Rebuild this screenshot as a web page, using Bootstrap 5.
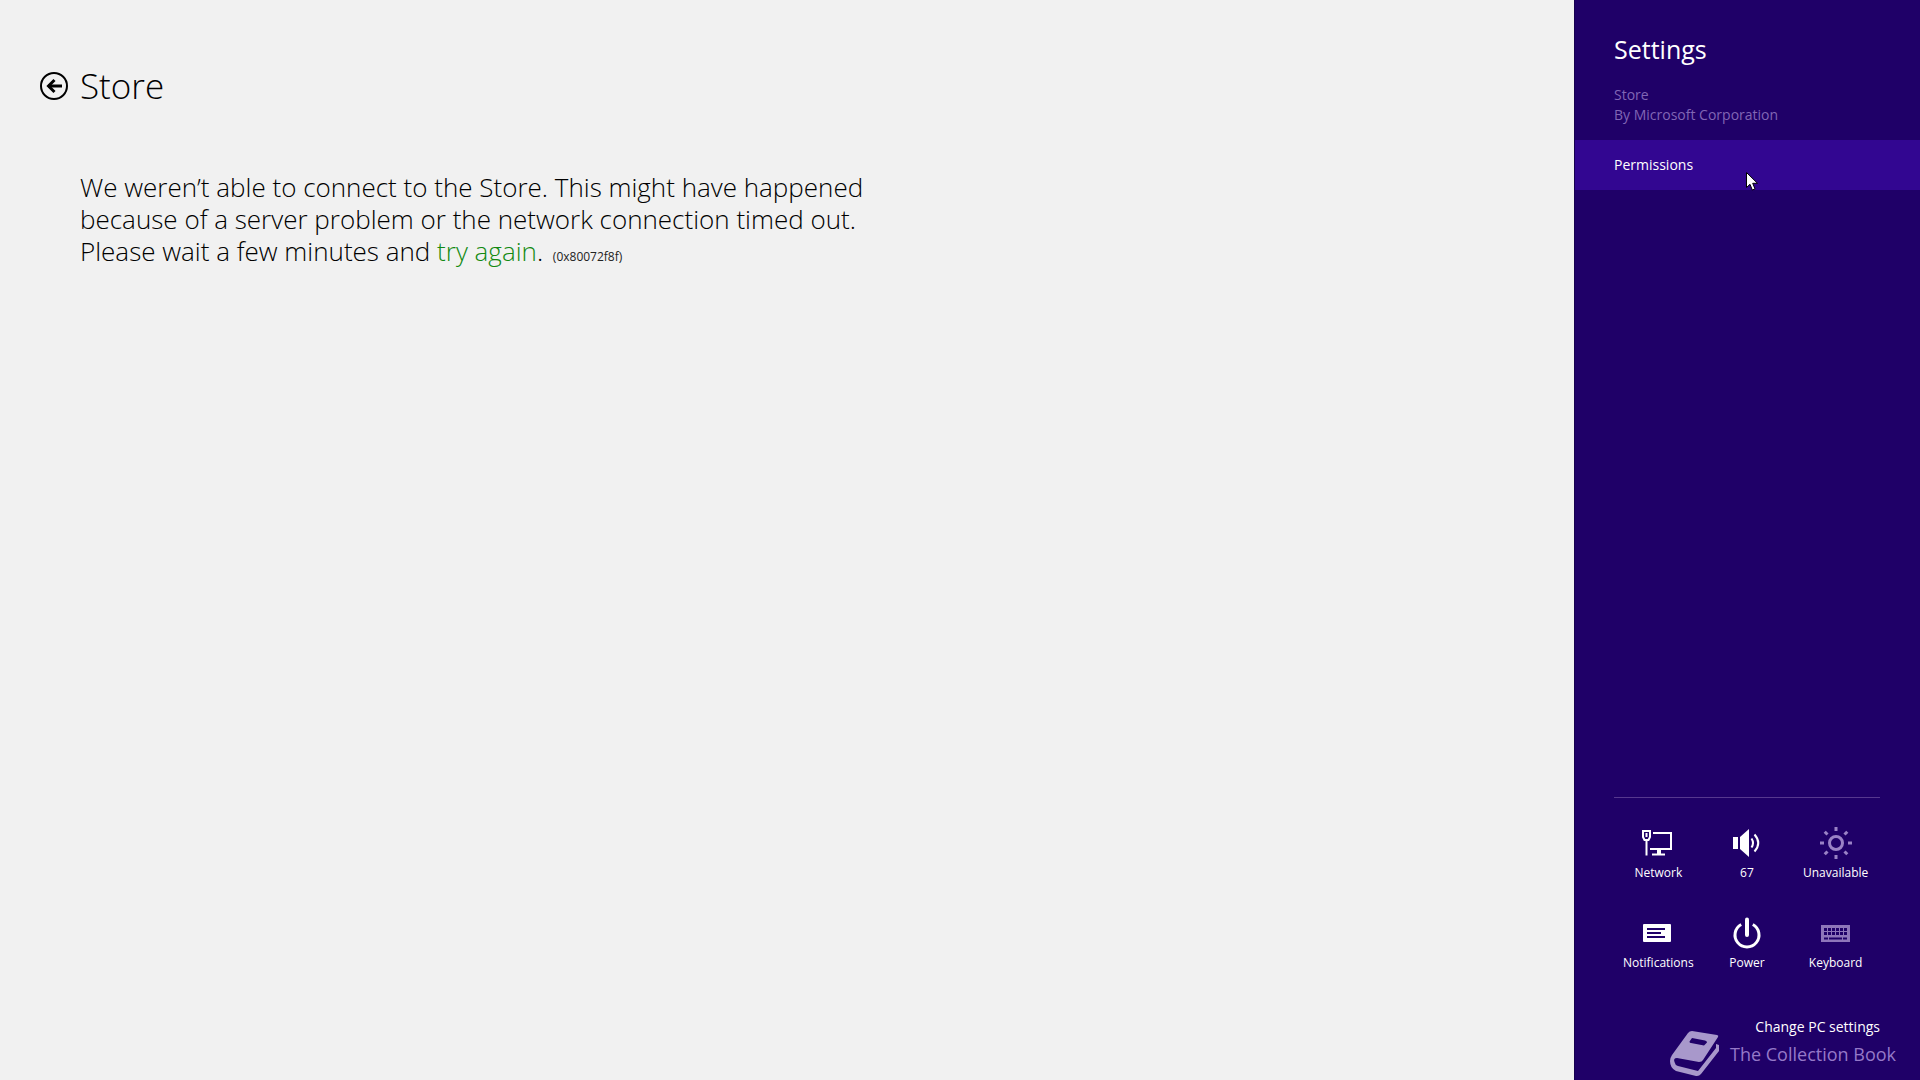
<!DOCTYPE html>
<html lang="en">
<head>
<meta charset="utf-8">
<meta name="viewport" content="width=device-width, initial-scale=1">
<title>Store</title>
<link href="https://cdn.jsdelivr.net/npm/bootstrap@5.3.0/dist/css/bootstrap.min.css" rel="stylesheet">
<style>
  body { font-family: "Open Sans", "Noto Sans", sans-serif; background: #f1f1f1; color: #000; }
  .store-page { padding: 64px 40px 40px; }
  .page-head { gap: 12px; }
  .back-btn { width: 28px; height: 28px; line-height: 0; }
  .page-title { font-size: 35px; line-height: 44px; font-weight: 300; }
  .message { margin: 63px 0 0 40px; max-width: 800px; font-size: 26px; line-height: 32px; font-weight: 300; }
  .message a { color: #128a12; }
  .error-code { margin-left: 3px; font-size: 12px; font-weight: 400; color: #222; }
  .settings-pane { width: 346px; background: #1f0068; box-shadow: inset 1px 0 #170050; color: #fff; }
  .pane-head { padding: 31px 40px 0; }
  .pane-title { font-size: 25px; line-height: 36px; font-weight: 400; }
  .pane-app { margin-top: 18px; font-size: 14px; line-height: 20px; color: #8166b5; }
  .pane-item { margin: 15px 0 0 1px; height: 50px; padding: 0 39px 2px; font-size: 14px; color: #fff; background: #320691; }
  .pointer { left: 171px; top: 32px; }
  .quick-area { margin: 0 40px; border-top: 1px solid #56388f; padding-top: 29px; }
  .tile { height: 90px; font-size: 12px; line-height: 16px; color: #fff; }
  .tile svg { margin-bottom: 6px; }
  .tile-off svg { color: #9a82c6; }
  .pc-settings { margin: 8px 40px 41px; height: 24px; font-size: 14px; line-height: 24px; color: #fff; }
  .watermark { right: 24px; bottom: 2px; gap: 10px; color: #a898cb; font-size: 18px; line-height: 24px; }
  .watermark span { color: #9579c8; }
</style>
<script src="https://cdn.jsdelivr.net/npm/bootstrap@5.3.0/dist/js/bootstrap.bundle.min.js"></script>
</head>
<body>
<div class="d-flex min-vh-100">
  <main class="store-page flex-grow-1">
    <header class="page-head d-flex align-items-center">
      <button type="button" class="back-btn btn p-0 border-0" aria-label="Back">
        <svg width="28" height="28" viewBox="0 0 28 28" fill="none" stroke="#000"><circle cx="14" cy="14" r="13" stroke-width="2"/><path d="M22 14H8" stroke-width="3"/><path d="M14.500 8L8.500 14L14.500 20" stroke-width="3"/></svg>
      </button>
      <h1 class="page-title m-0">Store</h1>
    </header>
    <p class="message mb-0">We weren’t able to connect to the Store. This might have happened because of a server problem or the network connection timed out.
      <span class="d-block"><span>Please wait a few minutes and</span> <a href="#" class="text-decoration-none">try again</a>. <span class="error-code">(0x80072f8f)</span></span></p>
  </main>

  <aside class="settings-pane d-flex flex-column flex-shrink-0 position-relative">
    <div class="pane-head">
      <h2 class="pane-title m-0">Settings</h2>
      <div class="pane-app">Store<br>By Microsoft Corporation</div>
    </div>
    <a href="#" class="pane-item d-flex align-items-center text-decoration-none position-relative">Permissions
      <svg class="pointer position-absolute" width="13" height="20" viewBox="0 0 13 20"><path d="M.5 .5V15.500L4 12.300L6.300 18L9 16.900L6.700 11.300H11.500Z" fill="#fff" stroke="#000"/></svg>
    </a>

    <div class="quick-area mt-auto">
      <div class="row row-cols-3 g-0">
        <button type="button" class="tile col btn p-0 border-0 rounded-0 d-flex flex-column align-items-center">
          <svg width="32" height="32" viewBox="0 0 32 32" fill="none" stroke="currentColor" stroke-width="2"><path d="M11 6H29V22H8"/><path d="M17 22V27" stroke-width="4"/><path d="M10 27.500H23"/><path d="M1 4H8V10L6.500 13H2.500L1 10Z"/><path d="M4.500 6V10"/><path d="M4.500 13V28.500"/></svg>
          Network</button>
        <button type="button" class="tile col btn p-0 border-0 rounded-0 d-flex flex-column align-items-center">
          <svg width="32" height="32" viewBox="0 0 32 32" fill="none" stroke="currentColor" stroke-width="2"><path d="M2 10H7V22H2ZM9 10L18 2V30L9 22Z" fill="currentColor" stroke="none"/><path d="M20.500 11.500Q23.500 16 20.500 20.500M23.500 7.500Q31 16 23.500 24.500"/></svg>
          67</button>
        <button type="button" class="tile tile-off col btn p-0 border-0 rounded-0 d-flex flex-column align-items-center">
          <svg width="32" height="32" viewBox="0 0 32 32" fill="none" stroke="currentColor" stroke-width="3"><circle cx="16" cy="16" r="6.500"/><path d="M16 0V4M16 28V32M0 16H4M28 16H32M4.700 4.700L7.500 7.500M24.500 24.500L27.300 27.300M4.700 27.300L7.500 24.500M24.500 7.500L27.300 4.700"/></svg>
          Unavailable</button>
        <button type="button" class="tile col btn p-0 border-0 rounded-0 d-flex flex-column align-items-center">
          <svg width="32" height="32" viewBox="0 0 32 32"><rect x="1" y="7" width="28" height="18" rx="1" fill="currentColor"/><path d="M5 12H23M5 16H19M5 20H23" stroke="#1f0068" stroke-width="2"/></svg>
          Notifications</button>
        <button type="button" class="tile col btn p-0 border-0 rounded-0 d-flex flex-column align-items-center">
          <svg width="32" height="32" viewBox="0 0 32 32" fill="none" stroke="currentColor" stroke-width="3"><path d="M10.200 7.500A12 12 0 1 0 21.800 7.500" /><path d="M16 2.500V18" stroke-width="4" stroke-linecap="round"/></svg>
          Power</button>
        <button type="button" class="tile tile-off col btn p-0 border-0 rounded-0 d-flex flex-column align-items-center">
          <svg width="32" height="32" viewBox="0 0 32 32" fill="none" stroke="currentColor"><path d="M1 8H30V25H1Z" fill="#8e76ba" stroke="none"/><path d="M4 12.500H27M4 16.500H27" stroke="#1f0068" stroke-width="3" stroke-dasharray="3 1"/><path d="M4 21.500H8M9 21.500H22M23 21.500H27" stroke="#1f0068" stroke-width="2"/></svg>
          Keyboard</button>
      </div>
    </div>
    <a href="#" class="pc-settings text-end text-decoration-none">Change PC settings</a>

    <div class="watermark position-absolute d-flex align-items-center text-nowrap">
      <svg width="50" height="48" viewBox="0 0 50 48"><path fill="currentColor" fill-rule="evenodd" d="M22 1L47 5Q49 5.500 48 7L33 30Q32 32 29 32L7 28Q3 28 4.500 32Q5 35 8 36L28 41L46 18V14L49 15V21L31 44Q29 46.500 26 46L6 41Q0 38 0 31Q0 28 2 25L18 3Q19.500 1 22 1ZM22 8L19.500 11.500Q19.500 13 21 13L34 15.500L37 12.500Q37 11 35 10.500Z"/></svg>
      <span>The Collection Book</span>
    </div>
  </aside>
</div>
</body>
</html>
